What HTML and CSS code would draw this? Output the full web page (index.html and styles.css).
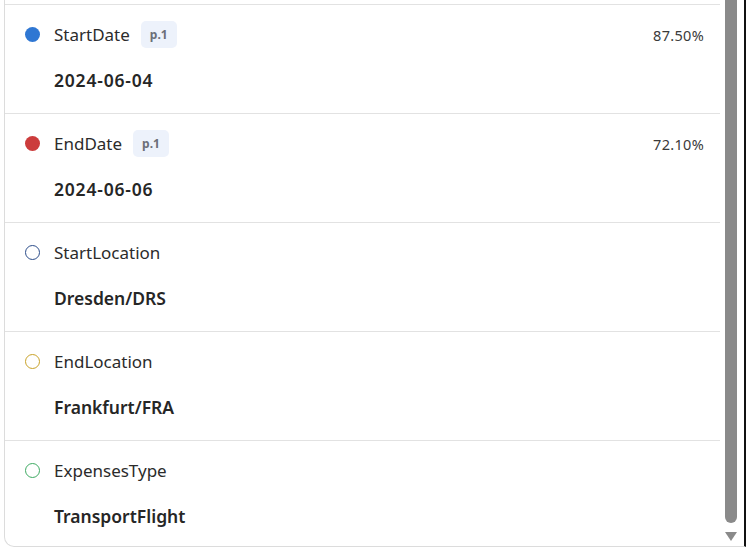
FILE: index.html
```html
<!DOCTYPE html>
<html lang="en">
<head>
  <meta charset="UTF-8">
  <meta name="viewport" content="width=device-width, initial-scale=1.0">
  <title>Extracted fields</title>
  <link rel="stylesheet" href="styles.css">
</head>
<body>

<div class="marco">
  <div class="panel">
    <div class="lista">

      <div class="campo">
        <div class="cabecera">
          <span class="punto lleno azul"></span>
          <span class="nombre">StartDate</span>
          <span class="pagina">p.1</span>
          <span class="confianza">87.50%</span>
        </div>
        <div class="valor fecha">2024-06-04</div>
      </div>

      <div class="campo">
        <div class="cabecera">
          <span class="punto lleno rojo"></span>
          <span class="nombre">EndDate</span>
          <span class="pagina">p.1</span>
          <span class="confianza">72.10%</span>
        </div>
        <div class="valor fecha">2024-06-06</div>
      </div>

      <div class="campo">
        <div class="cabecera">
          <span class="punto marino"></span>
          <span class="nombre">StartLocation</span>
        </div>
        <div class="valor">Dresden/DRS</div>
      </div>

      <div class="campo">
        <div class="cabecera">
          <span class="punto dorado"></span>
          <span class="nombre">EndLocation</span>
        </div>
        <div class="valor">Frankfurt/FRA</div>
      </div>

      <div class="campo">
        <div class="cabecera">
          <span class="punto verde"></span>
          <span class="nombre">ExpensesType</span>
        </div>
        <div class="valor">TransportFlight</div>
      </div>

    </div>

    <div class="barra">
      <div class="pulgar"></div>
      <svg class="flecha" width="12" height="10" viewBox="0 0 12 10">
        <path d="M0 0 H12 L6 9 Z" fill="#8a8a8a"/>
      </svg>
    </div>
  </div>
</div>

</body>
</html>
```

FILE: styles.css
```css
body {
  margin: 0;
  background: white;
  font-family: "Noto Sans", "Open Sans", sans-serif;
  color: #222;
}
.marco {
  height: 547px;
  overflow: hidden;
}
.panel {
  margin-left: 4px;
  width: 739px;
  height: 546px;
  display: flex;
  border-left: 1px solid #dcdcdc;
  border-bottom: 1px solid #dcdcdc;
  border-right: 2px solid #111;
  border-bottom-left-radius: 10px;
  overflow: hidden;
}
.lista {
  width: 715px;
  padding-top: 4px;
  flex-shrink: 0;
}
.campo {
  height: 109px;
  box-sizing: border-box;
  border-top: 1px solid #e2e2e2;
  padding: 16px 16px 0 20px;
}
.cabecera {
  display: flex;
  align-items: center;
  height: 27px;
}
.punto {
  width: 15px;
  height: 15px;
  box-sizing: border-box;
  border-radius: 50%;
  border: 1.5px solid;
  margin-right: 14px;
  flex-shrink: 0;
}
.lleno { border: none; }
.azul { background: #2f77d3; }
.rojo { background: #cc3c3c; }
.marino { border-color: #2c4d8a; }
.dorado { border-color: #c9a228; }
.verde { border-color: #3eaa62; }
.nombre {
  font-size: 17px;
  color: #2b2b2b;
}
.pagina {
  margin-left: 11px;
  height: 27px;
  padding: 0 9px;
  display: flex;
  align-items: center;
  background: #edf2fb;
  border-radius: 5px;
  font-size: 12px;
  font-weight: bold;
  color: #6b6f78;
}
.confianza {
  margin-left: auto;
  font-size: 14.5px;
  letter-spacing: 0.3px;
  color: #3a3a3a;
}
.valor {
  margin: 20px 0 0 29px;
  font-size: 17.5px;
  line-height: 24px;
  font-weight: 600;
  color: #262626;
}
.fecha {
  letter-spacing: 0.8px;
}
.barra {
  flex: 1;
  display: flex;
  flex-direction: column;
  align-items: center;
  padding-right: 3px;
}
.pulgar {
  width: 12px;
  height: 523px;
  background: #8a8a8a;
  border-radius: 0 0 6px 6px;
}
.flecha {
  margin-top: 9px;
}
```
